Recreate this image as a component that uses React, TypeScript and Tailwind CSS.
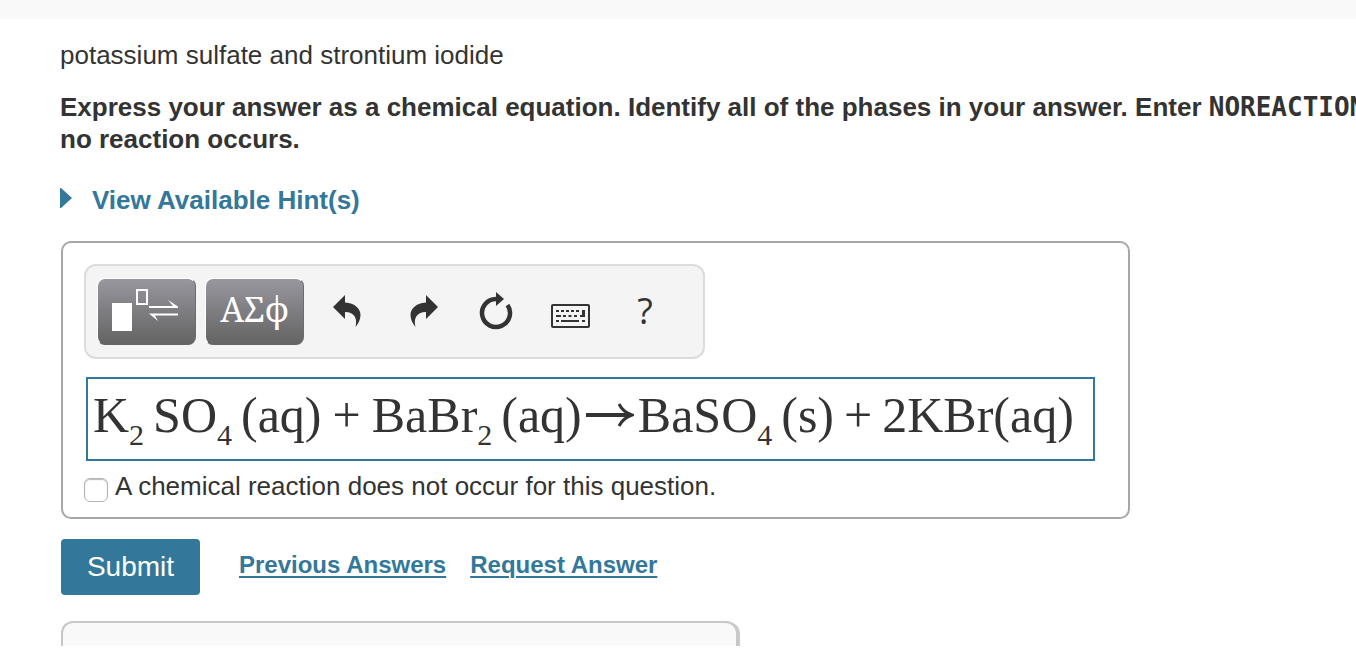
import type { ReactNode } from "react";

function ToolButton({ label, className, children }: { label: string; className: string; children: ReactNode }) {
  return (
    <button type="button" aria-label={label} className={`flex h-[67px] items-center justify-center cursor-pointer ${className}`}>
      {children}
    </button>
  );
}

function TemplateButton({ label, children }: { label: string; children: ReactNode }) {
  return (
    <button
      type="button"
      aria-label={label}
      className="flex h-[67px] w-[99px] items-center justify-center rounded-lg border border-t-white border-l-white border-r-[#6c6c6c] border-b-[#666] bg-linear-to-b from-[#98979f] to-[#646464] text-white cursor-pointer"
    >
      {children}
    </button>
  );
}

function Sub({ children }: { children: ReactNode }) {
  return <span className="relative top-[13px] mr-[9px] text-[30px]">{children}</span>;
}

function Toolbar() {
  return (
    <div className="flex w-full max-w-[621px] items-center rounded-xl border-2 border-[#dcdcdc] bg-[#f4f4f4] px-[11px] py-3">
      <div className="flex gap-[9px]">
        <TemplateButton label="Templates">
          <svg width="97" height="65" viewBox="0 0 97 65" fill="none">
            <rect x="14" y="24" width="20" height="28" fill="#fff" />
            <rect x="39" y="11" width="10" height="14" stroke="#fff" strokeWidth="2" />
            <path d="M51 27H75L70 21L80 27.500V29H51Z" fill="#fff" />
            <path d="M80 34.500H51L60 42L57 36.500H80Z" fill="#fff" />
          </svg>
        </TemplateButton>
        <TemplateButton label="Symbols">
          <span className="mb-1.5 font-['Noto_Serif','DejaVu_Serif','Liberation_Serif',serif] text-[34px] leading-10">ΑΣϕ</span>
        </TemplateButton>
      </div>
      <div className="ml-[5px] flex text-[#333]">
        <ToolButton label="Undo" className="w-[76px] pb-0.5">
          <svg width="28" height="32" viewBox="0 0 28 32" fill="currentColor">
            <path d="M0 12L12 0V7.500C22 8 27.500 14 27.500 20C27.500 25 25 29 22.500 32C24.500 24 22 17 12 17V24Z" />
          </svg>
        </ToolButton>
        <ToolButton label="Redo" className="w-[78px] pb-0.5">
          <svg width="28" height="32" viewBox="0 0 28 32" fill="currentColor">
            <path d="M28 12L16 0V7.500C6 8 .5 14 .5 20C.5 25 3 29 5.500 32C3.500 24 6 17 16 17V24Z" />
          </svg>
        </ToolButton>
        <ToolButton label="Reset" className="w-[66px] pb-0.5">
          <svg width="34" height="39" viewBox="0 0 34 39" fill="none">
            <path d="M17 8A14 14 0 1 0 28.500 14" stroke="currentColor" strokeWidth="4.500" />
            <path d="M17 1L25 8L17 15Z" fill="currentColor" />
          </svg>
        </ToolButton>
        <ToolButton label="Keyboard" className="w-[82px] pt-2">
          <svg width="39" height="24" viewBox="0 0 39 24" fill="currentColor">
            <path fillRule="evenodd" d="M2 0H37Q39 0 39 2V22Q39 24 37 24H2Q0 24 0 22V2Q0 0 2 0ZM2 2V22H37V2Z" />
            <path d="M5 6H8V8H5ZM10 6H13V8H10ZM15 6H18V8H15ZM20 6H23V8H20ZM25 6H28V8H25ZM31 6H34V13H29V11H31Z" />
            <path d="M5 11H10V13H5ZM12 11H15V13H12ZM17.500 11H20.500V13H17.500ZM23 11H26V13H23Z" />
            <path d="M5 16H8V18H5ZM10 16H28V18H10ZM31 16H34V18H31Z" />
          </svg>
        </ToolButton>
        <ToolButton label="Help" className="w-[68px] pb-0.5">
          <span className="font-['Open_Sans',sans-serif] text-[36px] leading-10">?</span>
        </ToolButton>
      </div>
    </div>
  );
}

function Equation() {
  return (
    <div
      role="textbox"
      aria-label="Chemical equation"
      tabIndex={0}
      className="mt-[18px] ml-0.5 mr-[9px] flex h-[84px] items-baseline border-2 border-[#33789a] pt-2 pl-[5px] font-['Liberation_Serif','Times_New_Roman',serif] text-[50px] leading-[56px] whitespace-nowrap"
    >
      K<Sub>2</Sub>
      SO<Sub>4</Sub>
      (aq)
      <span className="mx-[11px]">+</span>
      BaBr<Sub>2</Sub>
      (aq)
      <svg className="mx-1 mb-4 self-center" width="48" height="24" viewBox="0 0 48 24" fill="none" stroke="currentColor" aria-label="yields">
        <path d="M0 12H44" strokeWidth="4" />
        <path d="M33 1C36 7 40 10 46 12C40 14 36 17 33 23" strokeWidth="3" />
      </svg>
      BaSO<Sub>4</Sub>
      (s)
      <span className="mx-[10px]">+</span>
      2KBr(aq)
    </div>
  );
}

export default function App() {
  return (
    <div className="overflow-hidden bg-white font-['Liberation_Sans',Arial,sans-serif] text-[26px] leading-8 text-[#333]">
      <div className="h-[19px] bg-[#f9f9f9]" />
      <main className="pt-5 pl-[60px]">
        <p>potassium sulfate and strontium iodide</p>
        <p className="mt-5 font-bold whitespace-nowrap">
          Express your answer as a chemical equation. Identify all of the phases in your answer. Enter{" "}
          <code className="font-['DejaVu_Sans_Mono',monospace] leading-none">NOREACTION</code>
          <br />
          no reaction occurs.
        </p>

        <button type="button" className="mt-[29px] flex items-center font-bold text-[#33789a] cursor-pointer">
          <svg className="mr-5 mb-1" width="12" height="20" viewBox="0 0 12 20" fill="currentColor">
            <path d="M0 0H1L12 10L1 20H0Z" />
          </svg>
          View Available Hint(s)
        </button>

        <div className="ml-px">
          <section className="mt-[25px] w-full max-w-[1069px] rounded-[10px] border-2 border-[#a7a7a7] pt-[21px] pr-6 pb-[15px] pl-[21px]">
            <Toolbar />
            <Equation />
            <label className="mt-[9px] flex items-start gap-[7px]">
              <input
                type="checkbox"
                className="mt-2 size-6 appearance-none rounded-md border border-[#b4b4b4] bg-white shadow-[inset_0_1px_1px_#bbb]"
              />
              A chemical reaction does not occur for this question.
            </label>
          </section>

          <div className="mt-5 flex items-center">
            <button type="button" className="h-14 w-[139px] rounded bg-[#33789a] text-[28px] text-white cursor-pointer">
              Submit
            </button>
            <div className="mb-1 ml-[39px] flex gap-6 text-2xl font-bold text-[#33789a]">
              <a href="#" className="underline decoration-2 underline-offset-3">Previous Answers</a>
              <a href="#" className="underline decoration-2 underline-offset-3">Request Answer</a>
            </div>
          </div>

          <div className="mt-[26px] h-[25px] w-full max-w-[677px] rounded-t-[12px] border-2 border-b-0 border-[#c8c8c8] bg-[#f9f9f9] shadow-[2px_1px_1px_#c8c8c8] [clip-path:inset(0_-4px_0_0)]" />
        </div>
      </main>
    </div>
  );
}
